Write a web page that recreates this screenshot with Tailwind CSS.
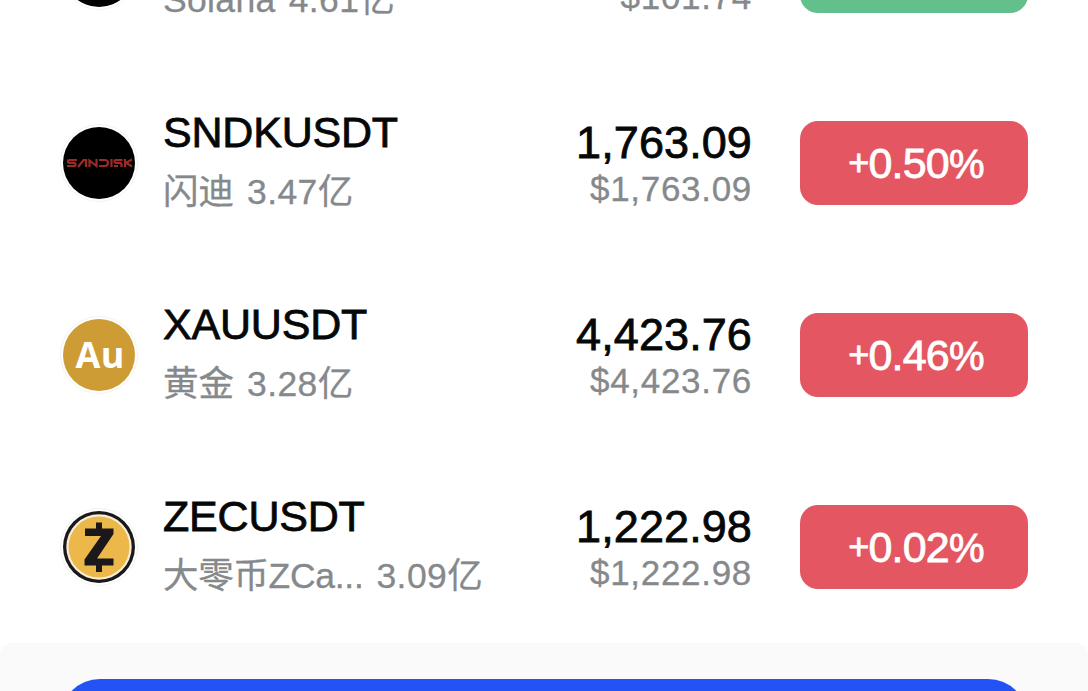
<!DOCTYPE html>
<html lang="zh-CN">
<head>
  <meta charset="UTF-8" />
  <meta name="viewport" content="width=device-width, initial-scale=1.0"/>
  <title>行情</title>
  <script src="https://cdn.jsdelivr.net/npm/@tailwindcss/browser@4"></script>
</head>
<body class="h-screen overflow-hidden bg-white font-['Liberation_Sans','Noto_Sans_CJK_SC',sans-serif]">
  <div id="list" class="-mt-[125px]"></div>

  <div class="h-12 overflow-hidden rounded-t-[12px] bg-[#fafafa] px-[60px] pt-9">
    <button class="block h-24 w-full rounded-[40px] bg-[#2353f5]"></button>
  </div>

<script>
const icons = {
  sol: `<circle cx="39" cy="39" r="36" fill="#000"/>`,
  sndk: `
    <circle cx="39" cy="39" r="36" fill="#000"/>
    <g fill="none" stroke="#9c2b28" stroke-width="2.2">
      <path d="M17 36H9.500Q8 36 8 37.300Q8 38.800 9.500 38.800H14Q15.500 38.800 15.500 40.500Q15.500 42 14 42H7"/>
      <path d="M18 43L23.500 36H26V43"/>
      <path d="M29.500 43V36.500L36.500 42V35"/>
      <path d="M39 36H44.500Q48 36 48 39Q48 42 44.500 42H39"/>
      <path d="M51.500 35V43"/>
      <path d="M62.500 36H56Q54.500 36 54.500 37.300Q54.500 38.800 56 38.800H60Q61.500 38.800 61.500 40.500V43M54 42H58"/>
      <path d="M65 35V43M72 35.500L66 38.800L72 42.500"/>
    </g>`,
  xau: `
    <circle cx="39" cy="39" r="36" fill="#cd9c34"/>
    <text x="40" y="52" text-anchor="middle" textLength="49" font-family="Open Sans" font-weight="700" font-size="36" fill="#fff">Au</text>`,
  zec: `
    <circle cx="39" cy="39" r="36" fill="#1b181b"/>
    <circle cx="39" cy="39" r="32.700" fill="#f8eed8"/>
    <circle cx="39" cy="39" r="30.500" fill="#ecb849"/>
    <path d="M36 14.500h6v6h11.500v5.500L37 50.500h16.500v7H42v6.500h-6v-6.500H24.500v-6L41 28h-16v-7.500h11z" fill="#1b181b"/>`
};

const rows = [
  { icon: "sol", symbol: "SOLUSDT", name: "Solana", volume: "4.61亿", price: "101.74", change: "-0.31", up: false, spacing: "tracking-[0.350px]" },
  { icon: "sndk", symbol: "SNDKUSDT", name: "闪迪", volume: "3.47亿", price: "1,763.09", change: "+0.50", up: true, spacing: "tracking-normal" },
  { icon: "xau", symbol: "XAUUSDT", name: "黄金", volume: "3.28亿", price: "4,423.76", change: "+0.46", up: true, spacing: "tracking-normal" },
  { icon: "zec", symbol: "ZECUSDT", name: "大零币ZCa...", volume: "3.09亿", price: "1,222.98", change: "+0.02", up: true, spacing: "tracking-[-0.300px]" }
];

document.getElementById("list").innerHTML = rows.map(r => `
  <div class="flex h-48 items-center px-[60px]">
    <svg viewBox="0 0 78 78" class="size-[78px] shrink-0">
      <circle cx="39" cy="39" r="38.500" fill="#fff" stroke="#f2f2f2" stroke-width="1"/>
      ${icons[r.icon]}
    </svg>
    <div class="ml-[25px] flex-1 whitespace-nowrap">
      <div class="h-[58px] text-[43px] leading-[54px] tracking-[-0.200px] text-[#060808] [-webkit-text-stroke:0.8px_#060808]">${r.symbol}</div>
      <div class="flex h-[58px] gap-[13px] text-[35.500px] leading-[58px] text-[#86898b] [-webkit-text-stroke:0.3px_#86898b]">
        <span class="${r.spacing}">${r.name}</span><span class="tracking-[0.400px]">${r.volume}</span>
      </div>
    </div>
    <div class="w-[220px] pt-[5px] text-right whitespace-nowrap">
      <div class="h-[47px] text-[45px] leading-[48px] tracking-[0.100px] text-[#060808] [-webkit-text-stroke:0.8px_#060808]">${r.price}</div>
      <div class="h-[46px] text-[35px] leading-[46px] tracking-[0.700px] text-[#86898b] [-webkit-text-stroke:0.3px_#86898b]">$${r.price}</div>
    </div>
    <div class="ml-12 flex h-[84px] w-[228px] items-center justify-center rounded-[18px] pl-1 text-[43px] tracking-[-0.800px] text-white [-webkit-text-stroke:0.8px_#fff] ${r.up ? "bg-[#e45762]" : "bg-[#63c08d]"}">
      <div class="flex items-baseline"><span class="pb-1 text-[36px] leading-none -translate-y-[3px]">${r.change[0]}</span><span>${r.change.slice(1)}</span><span class="text-[40px]">%</span></div>
    </div>
  </div>
`).join('');
</script>
</body>
</html>
